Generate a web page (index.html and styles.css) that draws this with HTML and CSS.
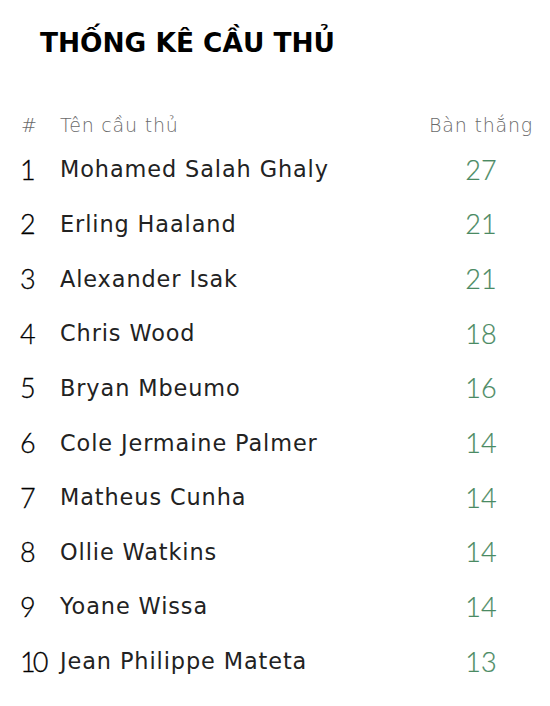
FILE: index.html
```html
<!DOCTYPE html>
<html lang="vi">
<head>
<meta charset="utf-8">
<link rel="stylesheet" href="styles.css">
</head>
<body>
<main class="page">
  <h1 class="title">THỐNG KÊ CẦU THỦ</h1>
  <div class="table">
    <div class="row head">
      <span class="rank">#</span>
      <span class="name">Tên cầu thủ</span>
      <span class="goals">Bàn thắng</span>
    </div>
    <div class="row"><span class="rank">1</span><span class="name">Mohamed Salah Ghaly</span><span class="goals">27</span></div>
    <div class="row"><span class="rank">2</span><span class="name">Erling Haaland</span><span class="goals">21</span></div>
    <div class="row"><span class="rank">3</span><span class="name">Alexander Isak</span><span class="goals">21</span></div>
    <div class="row"><span class="rank">4</span><span class="name">Chris Wood</span><span class="goals">18</span></div>
    <div class="row"><span class="rank">5</span><span class="name">Bryan Mbeumo</span><span class="goals">16</span></div>
    <div class="row"><span class="rank">6</span><span class="name">Cole Jermaine Palmer</span><span class="goals">14</span></div>
    <div class="row"><span class="rank">7</span><span class="name">Matheus Cunha</span><span class="goals">14</span></div>
    <div class="row"><span class="rank">8</span><span class="name">Ollie Watkins</span><span class="goals">14</span></div>
    <div class="row"><span class="rank">9</span><span class="name">Yoane Wissa</span><span class="goals">14</span></div>
    <div class="row"><span class="rank">10</span><span class="name">Jean Philippe Mateta</span><span class="goals">13</span></div>
  </div>
</main>
</body>
</html>
```
FILE: styles.css
```css
html, body {
  margin: 0;
  padding: 0;
  background: #ffffff;
}
body {
  font-family: "DejaVu Sans", "Lato", sans-serif;
  color: #222222;
}
.page {
  padding: 25px 16px 0 20px;
}
.title {
  margin: 0 0 47px 20px;
  font-size: 26.4px;
  font-weight: 700;
  color: #000;
  line-height: 36px;
}
.table {
  display: flex;
  flex-direction: column;
}
.row {
  display: grid;
  grid-template-columns: 40px 1fr 106px;
  align-items: center;
  height: 54.65px;
}
.row.head {
  height: 33px;
  margin-bottom: 1px;
}
.rank {
  font-family: "Lato", sans-serif;
  font-size: 27px;
  font-weight: 300;
  color: #000;
  letter-spacing: -3px;
  -webkit-text-stroke: 0.3px #000;
}
.name {
  font-size: 22.4px;
  font-weight: 400;
  color: #222;
  letter-spacing: 0.9px;
}
.goals {
  font-family: "Lato", sans-serif;
  text-align: center;
  font-size: 27px;
  font-weight: 300;
  color: #4a8a63;
  -webkit-text-stroke: 0.2px #4a8a63;
}
.head .name, .head .goals {
  font-family: "DejaVu Sans", sans-serif;
  font-size: 19px;
  font-weight: 200;
  color: #6a6a6a;
  letter-spacing: 0.8px;
  -webkit-text-stroke: 0;
}
.head .rank {
  font-family: "DejaVu Sans", sans-serif;
  font-size: 19px;
  font-weight: 200;
  color: #6a6a6a;
  letter-spacing: 0;
  padding-left: 1px;
  -webkit-text-stroke: 0;
}
```
